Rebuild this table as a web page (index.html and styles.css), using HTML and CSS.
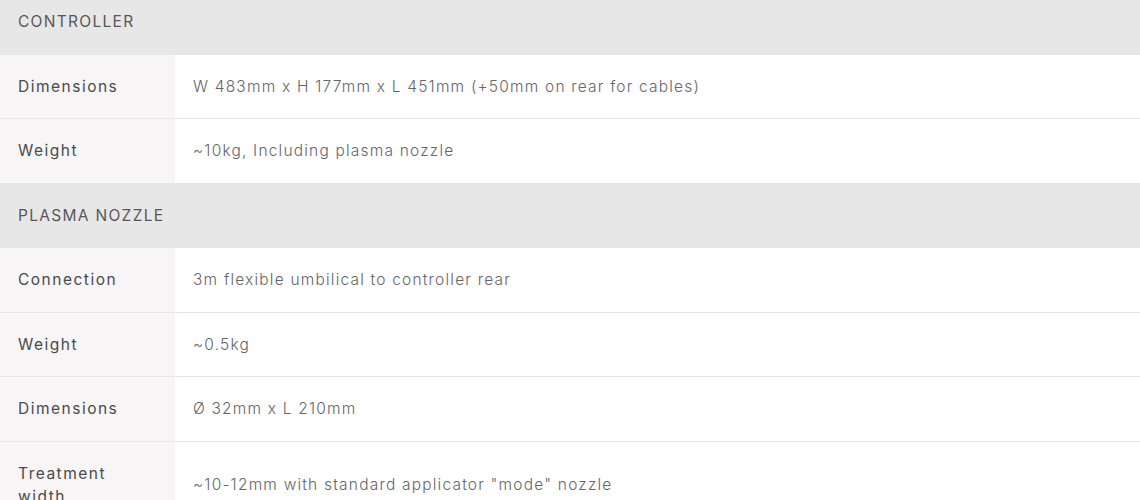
FILE: index.html
```html
<!DOCTYPE html>
<html>
<head>
<meta charset="utf-8">
<link rel="stylesheet" href="styles.css">
</head>
<body>
<table class="specs">
  <tbody>
    <tr class="group"><th colspan="2">CONTROLLER</th></tr>
    <tr><td class="label">Dimensions</td><td class="value">W 483mm x H 177mm x L 451mm (+50mm on rear for cables)</td></tr>
    <tr><td class="label">Weight</td><td class="value">~10kg, Including plasma nozzle</td></tr>
    <tr class="group"><th colspan="2">PLASMA NOZZLE</th></tr>
    <tr><td class="label">Connection</td><td class="value">3m flexible umbilical to controller rear</td></tr>
    <tr><td class="label">Weight</td><td class="value">~0.5kg</td></tr>
    <tr><td class="label">Dimensions</td><td class="value">Ø 32mm x L 210mm</td></tr>
    <tr><td class="label">Treatment width</td><td class="value">~10-12mm with standard applicator "mode" nozzle</td></tr>
  </tbody>
</table>
</body>
</html>
```
FILE: styles.css
```css
html, body {
  margin: 0;
  padding: 0;
  background: #ffffff;
}
body {
  font-family: "Inter", "Open Sans", sans-serif;
  font-size: 15.5px;
  color: #555555;
  overflow: hidden;
}
.specs {
  width: 100%;
  border-collapse: collapse;
  margin-top: -10px;
}
.specs th,
.specs td {
  padding: 20px 18px;
  line-height: 23.5px;
  border-bottom: 1px solid #e6e6e6;
  text-align: left;
  vertical-align: middle;
}
.group th {
  background: #e7e7e7;
  font-weight: 400;
  color: #575757;
  letter-spacing: 1.3px;
}
.label {
  width: 139px;
  background: #f7f5f5;
  font-weight: 400;
  color: #4a4a4a;
  letter-spacing: 1.5px;
  line-height: 25px;
}
.value {
  font-weight: 300;
  color: #666666;
  padding-left: 19px;
  letter-spacing: 1.2px;
}
```
